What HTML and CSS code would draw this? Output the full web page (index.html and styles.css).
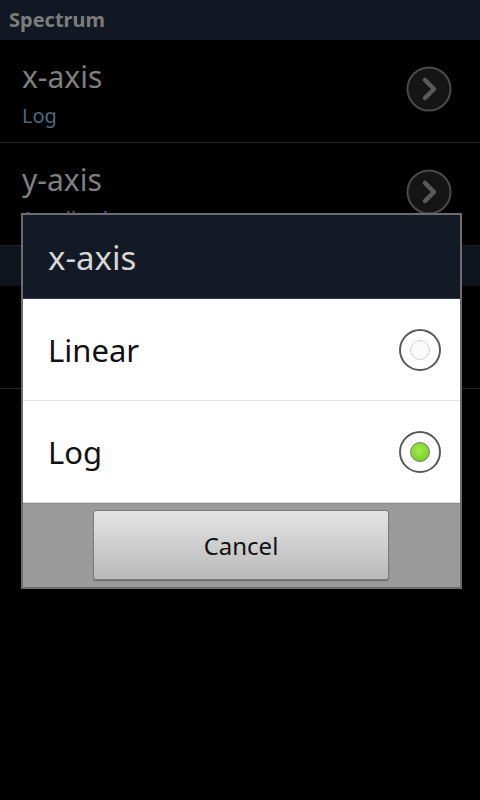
FILE: index.html
```html
<!DOCTYPE html>
<html lang="en">
<head>
  <meta charset="UTF-8" />
  <meta name="viewport" content="width=device-width, initial-scale=1.0"/>
  <title>Spectrum</title>
  <link rel="stylesheet" href="styles.css">
</head>
<body>
  <div class="screen">
    <div class="category">Spectrum</div>

    <div class="pref">
      <div class="pref-text">
        <div class="pref-title">x-axis</div>
        <div class="pref-summary">Log</div>
      </div>
      <svg class="pref-arrow" width="48" height="48" viewBox="0 0 48 48">
        <circle cx="24" cy="24" r="21.5" fill="#151515" stroke="#4a4a4a" stroke-width="2"/>
        <path d="M20 15 L29 24 L20 33" fill="none" stroke="#5a5a5a" stroke-width="4.5" stroke-linecap="round" stroke-linejoin="round"/>
      </svg>
    </div>

    <div class="pref">
      <div class="pref-text">
        <div class="pref-title">y-axis</div>
        <div class="pref-summary">Amplitude</div>
      </div>
      <svg class="pref-arrow" width="48" height="48" viewBox="0 0 48 48">
        <circle cx="24" cy="24" r="21.5" fill="#151515" stroke="#4a4a4a" stroke-width="2"/>
        <path d="M20 15 L29 24 L20 33" fill="none" stroke="#5a5a5a" stroke-width="4.5" stroke-linecap="round" stroke-linejoin="round"/>
      </svg>
    </div>

    <!-- hidden behind the dialog -->
    <div class="category dim"></div>
    <div class="pref"></div>

    <div class="dialog">
      <div class="dialog-title">x-axis</div>
      <div class="choice">
        <span>Linear</span>
        <span class="radio"></span>
      </div>
      <div class="choice">
        <span>Log</span>
        <span class="radio checked"></span>
      </div>
      <div class="dialog-buttons">
        <button class="btn">Cancel</button>
      </div>
    </div>
  </div>
</body>
</html>
```

FILE: styles.css
```css
body {
  margin: 0;
  padding: 0;
  background: #000;
  font-family: 'Noto Sans', 'Open Sans', sans-serif;
}

.screen {
  position: relative;
  width: 480px;
  height: 800px;
  overflow: hidden;
  background: #000;
}

.category {
  height: 40px;
  line-height: 40px;
  padding-left: 9px;
  background: #111823;
  color: #7c7c7c;
  font-size: 20px;
  font-weight: bold;
}

.category.dim {
  background: #0e141d;
}

.pref {
  box-sizing: border-box;
  height: 103px;
  display: flex;
  align-items: flex-start;
  justify-content: space-between;
  padding: 18px 27px 0 22px;
  border-bottom: 1px solid #232323;
}

.pref-title {
  color: #7f7f7f;
  font-size: 30px;
  line-height: 38px;
}

.pref-summary {
  margin-top: 6px;
  color: #4b6a7e;
  font-size: 20px;
  line-height: 28px;
}

.pref-arrow {
  align-self: center;
  margin-top: -22px;
}

.dialog {
  position: absolute;
  left: 21px;
  top: 213px;
  width: 437px;
  border: 2px solid #6c6c6c;
  background: #fff;
}

.dialog-title {
  box-sizing: border-box;
  height: 84px;
  line-height: 86px;
  padding-left: 25px;
  background: #131a25;
  border-bottom: 1px solid #2e3a48;
  color: #d6d6d6;
  font-size: 33px;
}

.choice {
  box-sizing: border-box;
  height: 102px;
  display: flex;
  align-items: center;
  justify-content: space-between;
  padding: 0 19px 0 25px;
  border-bottom: 1px solid #e2e2e2;
  color: #111;
  font-size: 31px;
}

.choice:last-of-type {
  height: 101px;
  border-bottom: none;
}

.radio {
  position: relative;
  width: 38px;
  height: 38px;
  border: 2px solid #595959;
  border-radius: 50%;
  background: #fff;
}

.radio::after {
  content: "";
  position: absolute;
  left: 9px;
  top: 9px;
  width: 18px;
  height: 18px;
  border: 1px solid #cfcfcf;
  border-radius: 50%;
  background: #fafafa;
}

.radio.checked::after {
  border-color: #7a7a7a;
  background: radial-gradient(circle at 45% 40%, #a4ea4c, #6cc716);
}

.dialog-buttons {
  box-sizing: border-box;
  height: 84px;
  display: flex;
  align-items: flex-start;
  padding-left: 70px;
  background: #9b9b9b;
  border-top: 1px solid #8a8a8a;
}

.btn {
  margin-top: 6px;
  width: 296px;
  height: 70px;
  border: 1px solid #7d7d7d;
  border-radius: 3px;
  background: linear-gradient(to bottom, #e4e4e4, #b9b9b9);
  box-shadow: 0 1px 1px rgba(0, 0, 0, 0.35);
  color: #111;
  font-family: 'Noto Sans', 'Open Sans', sans-serif;
  font-size: 24px;
}
```
